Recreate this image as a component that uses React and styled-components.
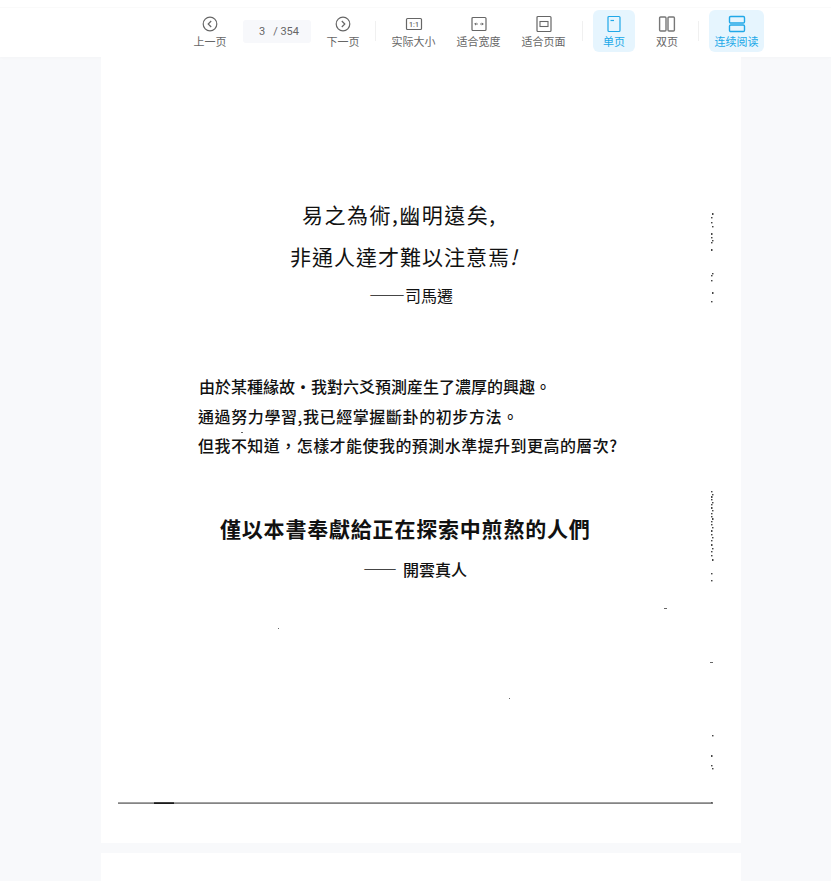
import React from 'react';
import styled, { createGlobalStyle } from 'styled-components';

const GlobalStyle = createGlobalStyle`
  html, body {
    margin: 0;
    padding: 0;
    height: 100%;
    overflow: hidden;
    background: #f8f9fb;
  }
`;
const Viewer = styled.div`
  height: 881px;
  overflow: hidden;
  display: flex;
  flex-direction: column;
  font-family: "Noto Sans CJK SC", "Liberation Sans", sans-serif;
`;
const Toolbar = styled.header`
  position: relative;
  flex: none;
  height: 57px;
  box-sizing: border-box;
  padding: 7px 0 2px 180px;
  background: #fff;
  box-shadow: 0 1px 3px rgba(0, 0, 0, 0.025), inset 0 7px 0 #fff, inset 0 8px 0 #fafafa;
  display: flex;
  align-items: center;
`;
const ToolButton = styled.button`
  flex: none;
  width: ${(p) => p.$width}px;
  height: 42px;
  margin: 0 ${(p) => p.$gap || 0}px 0 0;
  padding: 5px 0 0;
  border: 0;
  border-radius: 6px;
  background: ${(p) => (p.$active ? '#e6f5fe' : 'transparent')};
  color: ${(p) => (p.$active ? '#20a8e8' : '#666')};
  font: inherit;
  font-size: 11px;
  line-height: 14px;
  display: flex;
  flex-direction: column;
  align-items: center;
  gap: 1px;
  svg {
    display: block;
  }
`;
const PageCounter = styled.div`
  flex: none;
  width: 68px;
  height: 23px;
  box-sizing: border-box;
  margin-left: 3px;
  padding-left: 4px;
  border-radius: 3px;
  background: #f7f8fb;
  color: #666;
  font-family: "Roboto", sans-serif;
  font-size: 11px;
  display: flex;
  align-items: center;
  justify-content: center;
  gap: 8px;
`;
const Separator = styled.span`
  flex: none;
  width: 1px;
  height: 20px;
  margin: 0 ${(p) => p.$right}px 0 ${(p) => p.$left}px;
  background: #f0f0f0;
`;
const Pages = styled.main`
  flex: 1;
  min-height: 0;
  padding-left: 101px;
  display: flex;
  flex-direction: column;
  gap: 10px;
`;
const Sheet = styled.article`
  position: relative;
  flex: none;
  width: 640px;
  height: ${(p) => p.$height}px;
  box-sizing: border-box;
  padding: 145px 0 0 97px;
  background: #fff;
  color: #111;
  font-family: "Noto Sans CJK TC", "Liberation Serif", serif;
`;
const Verse = styled.p`
  margin: 0 0 ${(p) => p.$after || 0}px ${(p) => p.$left || 0}px;
  font-size: ${(p) => p.$size}px;
  line-height: ${(p) => p.$line}px;
  font-weight: ${(p) => p.$weight || 400};
  letter-spacing: ${(p) => p.$track || 0}px;
  white-space: nowrap;
`;
const Dash = styled.span`
  margin-right: ${(p) => p.$gap || 0}px;
  font-size: ${(p) => p.$size}px;
  letter-spacing: ${(p) => p.$track || 0}px;
  font-weight: ${(p) => p.$weight || 400};
  font-feature-settings: "fwid";
`;
const Specks = styled.svg`
  position: absolute;
  left: 0;
  top: 0;
  pointer-events: none;
`;
const IconGlyph = styled.svg`
  color: ${(p) => p.$tone || 'inherit'};
`;
const RatioLabel = styled.text`
  font-family: "Roboto", sans-serif;
  font-size: 7px;
  font-weight: 500;
  fill: currentColor;
  stroke: none;
`;

const Icon = ({ children, tone }) => (
  <IconGlyph $tone={tone} width="18" height="18" viewBox="0 0 18 18" fill="none" stroke="currentColor" strokeWidth="1.2">
    {children}
  </IconGlyph>
);

// stray marks left by the scanner along the right edge of the page
const edgeMarks = [
  156, 160, 165, 169, 176, 180, 183, 185, 192, 216, 218, 223, 235, 244,
  434, 437, 439, 442, 445, 447, 450, 453, 456, 459, 461, 464, 467, 470, 473, 477,
  480, 483, 487, 491, 494, 498, 502, 516, 523, 678, 698, 708, 711, 745,
];
const looseMarks = [
  [563, 551, 3, 1], [609, 605, 3, 1], [177, 571, 1, 1], [408, 641, 1, 1], [140, 375, 2, 1],
];

const App = () => (
  <Viewer>
    <GlobalStyle />
    <Toolbar>
      <ToolButton $width={60}>
        <Icon>
          <circle cx="9" cy="9" r="6.8" />
          <path d="M10.2 6 7.2 9l3 3" />
        </Icon>
        上一页
      </ToolButton>
      <PageCounter>
        <span>3</span>
        <span>/ 354</span>
      </PageCounter>
      <ToolButton $width={64}>
        <Icon>
          <circle cx="9" cy="9" r="6.8" />
          <path d="M7.8 6 10.8 9l-3 3" />
        </Icon>
        下一页
      </ToolButton>
      <Separator $left={0} $right={5} />
      <ToolButton $width={65}>
        <Icon>
          <rect x="1.5" y="3.5" width="15" height="11" rx="1" />
          <RatioLabel x="9" y="11.5" textAnchor="middle">1:1</RatioLabel>
        </Icon>
        实际大小
      </ToolButton>
      <ToolButton $width={65}>
        <Icon>
          <rect x="2" y="2.5" width="14" height="13" rx="1" />
          <path d="M4.8 9h3M10.2 9h3M6 7.8 4.8 9 6 10.2M12 7.8 13.2 9 12 10.2" strokeWidth="1" />
        </Icon>
        适合宽度
      </ToolButton>
      <ToolButton $width={65}>
        <Icon>
          <rect x="2" y="1.5" width="14" height="15" rx="1" />
          <rect x="5" y="6.5" width="8" height="5" strokeWidth="1.1" />
        </Icon>
        适合页面
      </ToolButton>
      <Separator $left={6} $right={10} />
      <ToolButton $width={42} $gap={11} $active>
        <Icon>
          <rect x="3" y="1.5" width="12" height="15" rx="1" />
          <path d="M5.5 5.5h3.5" />
        </Icon>
        单页
      </ToolButton>
      <ToolButton $width={42}>
        <Icon tone="#777">
          <rect x="1.6" y="2" width="6.4" height="14" rx="1" strokeWidth="1.4" />
          <rect x="10" y="2" width="6.4" height="14" rx="1" strokeWidth="1.4" />
        </Icon>
        双页
      </ToolButton>
      <Separator $left={10} $right={10} />
      <ToolButton $width={55} $active>
        <Icon>
          <rect x="1.5" y="1.5" width="15" height="6.5" rx="1.2" strokeWidth="1.4" />
          <rect x="1.5" y="10" width="15" height="6.5" rx="1.2" strokeWidth="1.4" />
        </Icon>
        连续阅读
      </ToolButton>
    </Toolbar>
    <Pages>
      <Sheet $height={786}>
        <Verse $left={104} $size={21} $line={24} $track={1.5} $after={18}>易之為術,幽明遠矣,</Verse>
        <Verse $left={92} $size={21} $line={24} $track={1} $after={15}>非通人達才難以注意焉<em>!</em></Verse>
        <Verse $left={171} $size={16} $line={22} $after={69}>
          <Dash $size={18}>——</Dash>司馬遷
        </Verse>
        <Verse $left={1} $size={16} $line={22} $track={0} $after={8} $weight={500}>由於某種緣故・我對六爻預測産生了濃厚的興趣。</Verse>
        <Verse $size={16} $line={22} $track={0.6} $after={7} $weight={500}>通過努力學習,我已經掌握斷卦的初步方法。</Verse>
        <Verse $size={16} $line={22} $track={0.45} $after={59} $weight={500}>但我不知道{'\uFF0C'}怎樣才能使我的預測水準提升到更高的層次?</Verse>
        <Verse $left={22} $size={21} $line={26} $track={0.8} $after={17} $weight={700}>僅以本書奉獻給正在探索中煎熬的人們</Verse>
        <Verse $left={165} $size={16} $line={22} $weight={500}>
          <Dash $size={17} $track={2} $gap={4} $weight={700}>——</Dash>開雲真人
        </Verse>
        <Specks width="640" height="786">
          {edgeMarks.map((y, i) => (
            <rect key={y} x={610 + (i % 3 === 0 ? 1 : 0)} y={y} width="1.5" height={i % 4 === 0 ? 2 : 1.4} fill="#444" />
          ))}
          {looseMarks.map(([x, y, w, h]) => (
            <rect key={`${x}-${y}`} x={x} y={y} width={w} height={h} fill="#666" />
          ))}
          <rect x="17" y="745.4" width="595" height="1.4" fill="#666" />
          <rect x="53" y="745.4" width="20" height="1.4" fill="#000" />
        </Specks>
      </Sheet>
      <Sheet $height={100} />
    </Pages>
  </Viewer>
);

export default App;
